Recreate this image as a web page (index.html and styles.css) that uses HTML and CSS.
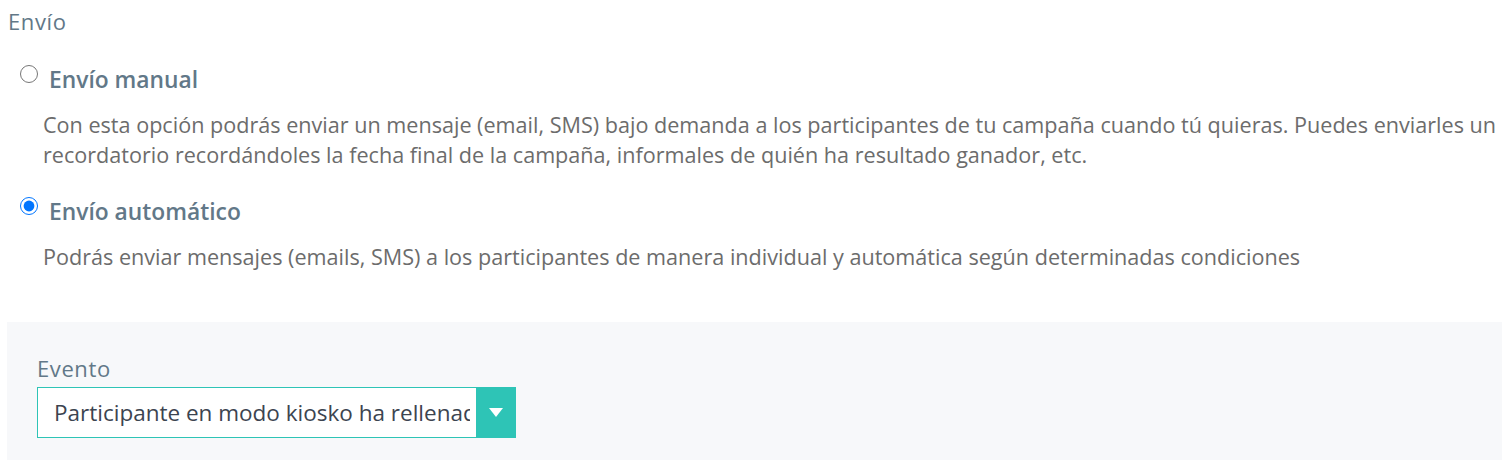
FILE: index.html
```html
<!DOCTYPE html>
<html lang="es">
<head>
<meta charset="utf-8">
<title>Envío</title>
<link rel="stylesheet" href="styles.css">
</head>
<body>
<div class="page">
  <div class="section-title">Envío</div>
  <div class="option">
    <label class="option-head">
      <input type="radio" name="envio" class="radio">
      <span class="option-title">Envío manual</span>
    </label>
    <p class="option-desc">Con esta opción podrás enviar un mensaje (email, SMS) bajo demanda a los participantes de tu campaña cuando tú quieras. Puedes enviarles un recordatorio recordándoles la fecha final de la campaña, informales de quién ha resultado ganador, etc.</p>
  </div>
  <div class="option option-second">
    <label class="option-head">
      <input type="radio" name="envio" class="radio" checked>
      <span class="option-title">Envío automático</span>
    </label>
    <p class="option-desc">Podrás enviar mensajes (emails, SMS) a los participantes de manera individual y automática según determinadas condiciones</p>
  </div>
  <div class="panel">
    <div class="field-label">Evento</div>
    <div class="select">
      <span class="select-text">Participante en modo kiosko ha rellenado el formulario</span>
      <span class="select-btn"><span class="tri"></span></span>
    </div>
  </div>
</div>
</body>
</html>
```
FILE: styles.css
```css
html, body {
  margin: 0;
  padding: 0;
  background: #ffffff;
}
body {
  font-family: "Open Sans", "Noto Sans", sans-serif;
  overflow: hidden;
}
.page {
  padding: 8px 0 0 8px;
}
.section-title {
  font-size: 22px;
  line-height: 26px;
  font-weight: 500;
  letter-spacing: 0.6px;
  color: #627888;
  height: 26px;
}
.option {
  padding-top: 30px;
}
.option-second {
  padding-top: 26px;
}
.option-head {
  display: flex;
  align-items: flex-start;
  gap: 11px;
  padding-left: 12px;
}
.radio {
  width: 18px;
  height: 18px;
  margin: 1px 0 0 0;
  flex: none;
}
.option-title {
  font-size: 22.8px;
  line-height: 30px;
  font-weight: 600;
  color: #627888;
  margin-top: 1px;
}
.option-desc {
  margin: 15px 0 0 35px;
  font-size: 21.6px;
  line-height: 30px;
  color: #6c6c6c;
}
.panel {
  margin-top: 50px;
  margin-left: -1px;
  background: #f7f8fa;
  padding: 32px 30px 30px;
  height: 200px;
}
.field-label {
  font-size: 22px;
  line-height: 28px;
  font-weight: 500;
  letter-spacing: 0.6px;
  color: #627888;
  margin-bottom: 5px;
}
.select {
  width: 479px;
  height: 51px;
  display: flex;
  box-sizing: border-box;
  border: 1px solid #2ec4b6;
  background: #fff;
}
.select-text {
  flex: 1;
  min-width: 0;
  overflow: hidden;
  white-space: nowrap;
  margin-right: 6px;
  padding-left: 16px;
  font-size: 22.5px;
  line-height: 49px;
  color: #3c4450;
}
.select-btn {
  width: 40px;
  flex: none;
  background: #2ec4b6;
  display: flex;
  align-items: center;
  justify-content: center;
  margin: -1px -1px -1px 0;
}
.tri {
  width: 0;
  height: 0;
  border-left: 7px solid transparent;
  border-right: 7px solid transparent;
  border-top: 9px solid #fff;
}
```
